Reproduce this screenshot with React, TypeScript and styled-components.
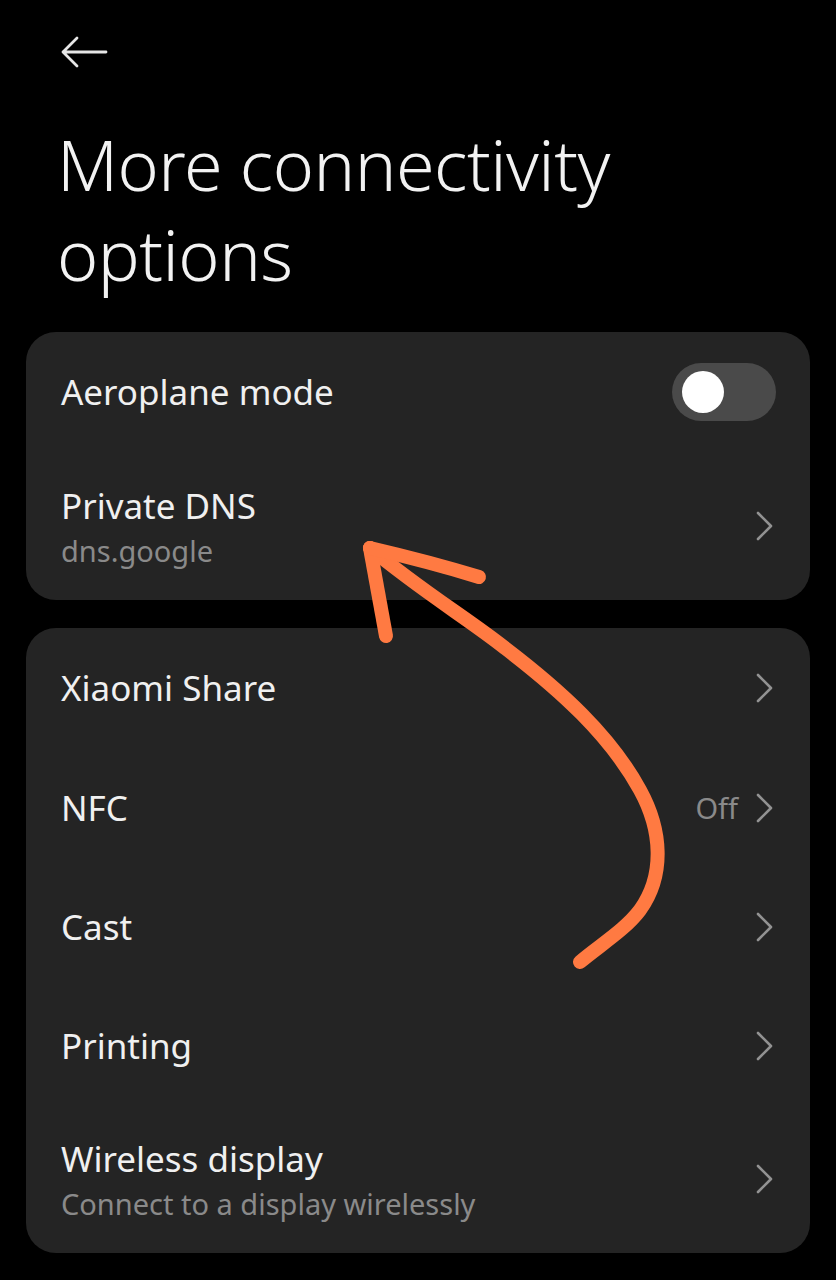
import React from "react";
import styled, { createGlobalStyle } from "styled-components";

const GlobalStyle = createGlobalStyle`
  html, body { margin: 0; padding: 0; background: #000; }
  body { font-family: "Noto Sans", Roboto, sans-serif; -webkit-font-smoothing: antialiased; }
  * { box-sizing: border-box; }
`;

const Page = styled.div`
  position: relative;
  width: 836px;
  height: 1280px;
  background: #000;
  overflow: hidden;
  padding: 0 26px;
`;

const Header = styled.div`
  height: 104px;
  display: flex;
  align-items: center;
  padding-left: 34px;
`;

const BackButton = styled.div`
  width: 50px;
  height: 36px;
  display: flex;
  align-items: center;
  color: #e6e6e6;
`;

const Title = styled.h1`
  margin: 15px 0 0 31px;
  font-family: "Noto Sans", sans-serif;
  font-weight: 300;
  font-size: 70px;
  line-height: 90px;
  color: #f2f2f2;
  letter-spacing: -0.5px;
  height: 213px;
`;

const Card = styled.div<{ $gap?: number }>`
  background: #242424;
  border-radius: 30px;
  margin-top: ${(p) => p.$gap ?? 0}px;
  display: flex;
  flex-direction: column;
`;

const Row = styled.div<{ $h: number }>`
  height: ${(p) => p.$h}px;
  display: flex;
  align-items: center;
  padding: 0 34px 0 35px;
`;

const TextBlock = styled.div<{ $twoLine?: boolean }>`
  flex: 1;
  display: flex;
  flex-direction: column;
  padding-top: ${(p) => (p.$twoLine ? 5 : 0)}px;
`;

const Label = styled.div`
  font-size: 35px;
  line-height: 44px;
  color: #f0f0f0;
  font-weight: 400;
`;

const Sub = styled.div`
  font-size: 29px;
  line-height: 46px;
  color: #8a8a8a;
`;

const Value = styled.div`
  font-size: 29px;
  color: #8a8a8a;
  margin-right: 18px;
`;

const Chevron = styled.div`
  width: 18px;
  height: 30px;
  margin-right: 2px;
  display: flex;
  align-items: center;
  color: #929292;
`;

const Toggle = styled.div`
  width: 104px;
  height: 58px;
  border-radius: 29px;
  background: #4a4a4a;
  display: flex;
  align-items: center;
  padding-left: 10px;
`;

const Knob = styled.div`
  width: 42px;
  height: 42px;
  border-radius: 50%;
  background: #fff;
`;

const Annotation = styled.svg`
  position: absolute;
  left: 0;
  top: 0;
  pointer-events: none;
`;

const ChevronIcon = () => (
  <Chevron>
    <svg width="18" height="30" viewBox="0 0 18 30">
      <path d="M2 2 L15 15 L2 28" fill="none" stroke="currentColor" strokeWidth="2.6" strokeLinecap="round" strokeLinejoin="round" />
    </svg>
  </Chevron>
);

type Item = { label: string; sub?: string; value?: string; h: number };

const card2: Item[] = [
  { label: "Xiaomi Share", h: 120 },
  { label: "NFC", value: "Off", h: 119 },
  { label: "Cast", h: 119 },
  { label: "Printing", h: 119 },
  { label: "Wireless display", sub: "Connect to a display wirelessly", h: 148 },
];

export default function App() {
  return (
    <Page>
      <GlobalStyle />
      <Header>
        <BackButton>
          <svg width="48" height="34" viewBox="0 0 48 34">
            <path d="M46 17 H3 M17 3 L3 17 L17 31" fill="none" stroke="currentColor" strokeWidth="2.8" strokeLinecap="round" strokeLinejoin="round" />
          </svg>
        </BackButton>
      </Header>
      <Title>
        More connectivity
        <br />
        options
      </Title>
      <Card $gap={0}>
        <Row $h={120}>
          <TextBlock>
            <Label>Aeroplane mode</Label>
          </TextBlock>
          <Toggle>
            <Knob />
          </Toggle>
        </Row>
        <Row $h={148}>
          <TextBlock $twoLine>
            <Label>Private DNS</Label>
            <Sub>dns.google</Sub>
          </TextBlock>
          <ChevronIcon />
        </Row>
      </Card>
      <Card $gap={28}>
        {card2.map((it) => (
          <Row key={it.label} $h={it.h}>
            <TextBlock $twoLine={!!it.sub}>
              <Label>{it.label}</Label>
              {it.sub && <Sub>{it.sub}</Sub>}
            </TextBlock>
            {it.value && <Value>{it.value}</Value>}
            <ChevronIcon />
          </Row>
        ))}
      </Card>
      <Annotation width="836" height="1280" viewBox="0 0 836 1280">
        <g fill="none" stroke="#FF7A42" strokeWidth="14" strokeLinecap="round" strokeLinejoin="round">
          <path d="M580 962 C600 945 625 930 640 910 C665 875 662 830 640 790 C610 735 560 690 505 648 C470 620 420 590 370 548" />
          <path d="M370 548 L386 636" />
          <path d="M370 548 C400 555 440 565 479 577" />
        </g>
      </Annotation>
    </Page>
  );
}
